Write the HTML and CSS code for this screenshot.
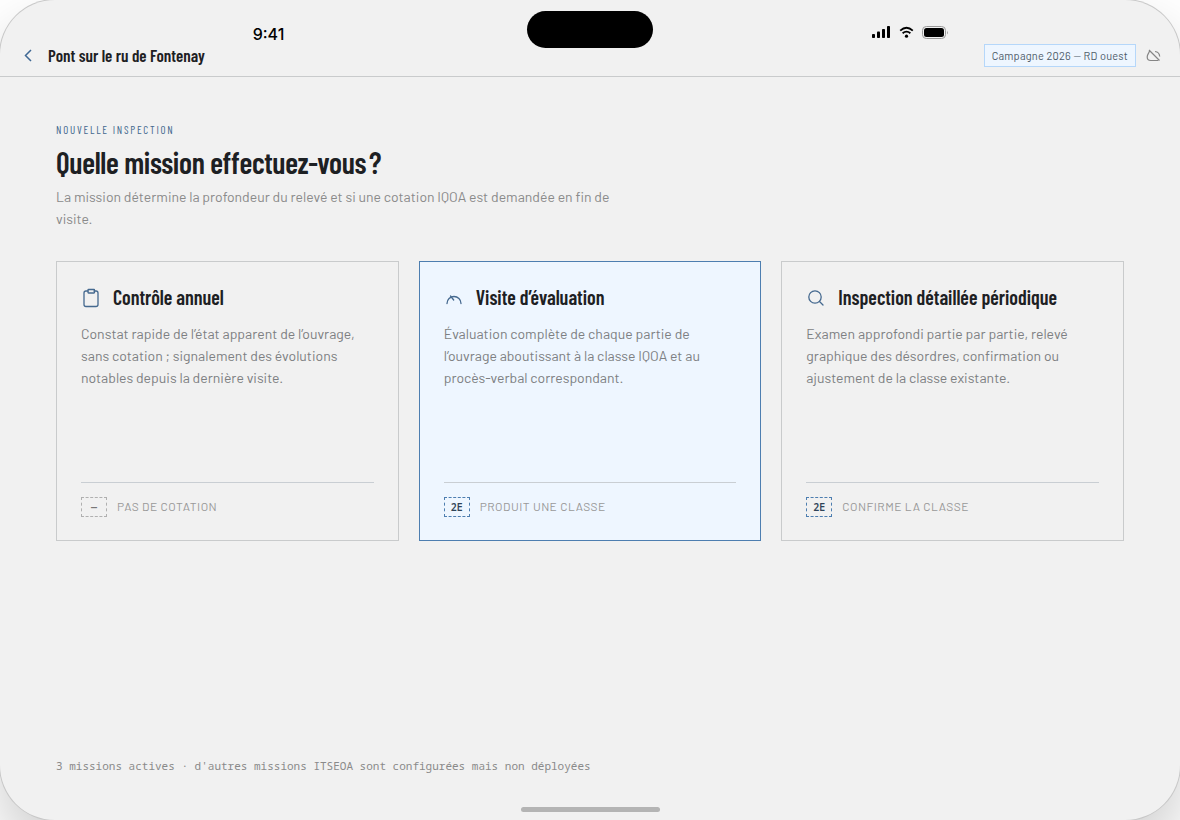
FILE: index.html
```html
<!DOCTYPE html>
<html lang="fr">

<head>
    <meta charset="utf-8">
    <meta name="viewport" content="width=device-width, initial-scale=1">
    <title>Nouvelle inspection</title>
    <link rel="stylesheet" href="styles.css">
</head>

<body>
    <div class="screen">
        <!-- barre d'état -->
        <div class="status">
            <span class="time">9:41</span>
            <div class="island"></div>
            <div class="status-icons">
                <svg width="19" height="12" viewBox="0 0 19 12">
                    <rect x="0" y="8" width="3" height="4" rx="0.8" />
                    <rect x="5" y="5.5" width="3" height="6.5" rx="0.8" />
                    <rect x="10" y="3" width="3" height="9" rx="0.8" />
                    <rect x="15" y="0" width="3" height="12" rx="0.8" />
                </svg>
                <svg width="15" height="12" viewBox="0 0 15 12">
                    <path d="M1.2 4.6Q7.5-1 13.8 4.6M3.6 7.3Q7.5 3.9 11.4 7.3" fill="none" stroke="#000" stroke-width="1.8" />
                    <circle cx="7.5" cy="10.2" r="1.6" />
                </svg>
                <svg width="27" height="13" viewBox="0 0 27 13">
                    <rect x="0.5" y="0.5" width="23" height="12" rx="3.8" fill="none" stroke="#999" />
                    <rect x="2" y="2" width="20" height="9" rx="2.5" />
                    <path d="M25 4.5q1.6 2 0 4z" fill="#999" />
                </svg>
            </div>
        </div>

        <header class="topbar">
            <button class="back" aria-label="Retour">
                <svg width="16" height="16" viewBox="0 0 16 16"><path d="M11 2L5.5 7.5 11 13" /></svg>
            </button>
            <span class="site">Pont sur le ru de Fontenay</span>
            <span class="campaign">Campagne 2026 — RD ouest</span>
            <svg class="offline" width="16" height="16" viewBox="0 0 16 16">
                <path d="M3 2L13.5 12.5M3.5 2.5C3.5 5 1.2 6 1.2 9c0 2 1.5 3.5 3.5 3.500h7.500M9 3.500c2.700.3 4.500 2.200 4.700 5" />
            </svg>
        </header>

        <main>
            <p class="eyebrow">Nouvelle inspection</p>
            <h1>Quelle mission effectuez-vous&#8239;?</h1>
            <p class="lead">La mission détermine la profondeur du relevé et si une cotation IQOA est demandée en fin de visite.</p>

            <div class="missions">
                <button class="card">
                    <span class="card-title">
                        <svg width="20" height="20" viewBox="0 0 20 20">
                            <path d="M7 3H5a2 2 0 0 0-2 2v11.5a2 2 0 0 0 2 2h10a2 2 0 0 0 2-2V5a2 2 0 0 0-2-2h-2" />
                            <rect x="7" y="1.5" width="6.5" height="3.5" rx="0.5" />
                        </svg>
                        Contrôle annuel
                    </span>
                    <span class="card-text">Constat rapide de l’état apparent de l’ouvrage, sans cotation ; signalement des évolutions notables depuis la dernière visite.</span>
                    <span class="card-foot"><span class="badge none">—</span>Pas de cotation</span>
                </button>
                <button class="card selected" aria-pressed="true">
                    <span class="card-title">
                        <svg width="20" height="20" viewBox="0 0 20 20">
                            <path d="M3 15.5a7 7 0 0 1 14 0M6.5 8l3.2 4" />
                        </svg>
                        Visite d’évaluation
                    </span>
                    <span class="card-text">Évaluation complète de chaque partie de l’ouvrage aboutissant à la classe IQOA et au procès-verbal correspondant.</span>
                    <span class="card-foot"><span class="badge">2E</span>Produit une classe</span>
                </button>
                <button class="card">
                    <span class="card-title">
                        <svg width="20" height="20" viewBox="0 0 20 20">
                            <circle cx="9" cy="9" r="6.2" />
                            <path d="M13.5 13.5l3.5 3.5" />
                        </svg>
                        Inspection détaillée périodique
                    </span>
                    <span class="card-text">Examen approfondi partie par partie, relevé graphique des désordres, confirmation ou ajustement de la classe existante.</span>
                    <span class="card-foot"><span class="badge">2E</span>Confirme la classe</span>
                </button>
            </div>

            <p class="note">3 missions actives · d'autres missions ITSEOA sont configurées mais non déployées</p>
        </main>
        <div class="home"></div>
    </div>
</body>

</html>
```
FILE: styles.css
```css
* {
    box-sizing: border-box;
}

body {
    margin: 0;
    background: #fff;
    color: #1d2023;
    font-family: Barlow, Roboto, sans-serif;
    overflow: hidden;
}

h1,
p {
    margin: 0;
}

button {
    border: 0;
    padding: 0;
    background: none;
    color: inherit;
    font-family: inherit;
    text-align: left;
    cursor: pointer;
}

.screen {
    position: relative;
    display: flex;
    flex-direction: column;
    min-height: 100vh;
    border-radius: 55px;
    background: #f1f1f1;
    box-shadow: 0 0 0 1px #c8c8c8, 0 30px 60px rgba(0, 0, 0, 0.2);
}

/* STATUS BAR */
.status {
    position: absolute;
    top: 11px;
    left: 0;
    right: 0;
    display: grid;
    grid-template-columns: 1fr 126px 1fr;
    justify-items: center;
}

.time {
    padding-top: 13px;
    padding-left: 10px;
    color: #000;
    font: 500 16px/20px Inter, sans-serif;
}

.island {
    width: 126px;
    height: 37px;
    border-radius: 19px;
    background: #000;
}

.status-icons {
    display: flex;
    align-items: flex-start;
    gap: 8px;
    padding-top: 15px;
    padding-right: 12px;
}

/* HEADER */
.topbar {
    display: flex;
    align-items: center;
    height: 77px;
    padding: 35px 18px 0 20px;
    border-bottom: 1px solid #c9cbcc;
}

.topbar svg {
    display: block;
    fill: none;
    stroke: #858585;
    stroke-width: 1.2;
}

.topbar .back svg {
    stroke: #3f6894;
    stroke-width: 1.5;
}

.site {
    margin-left: 12px;
    padding-bottom: 2px;
    font: 600 17px/22px "Barlow Condensed", "Roboto Condensed", Roboto, sans-serif;
}

.campaign {
    margin-left: auto;
    margin-right: 10px;
    padding: 0 7px;
    border: 1px solid #b5d7fa;
    background: #eef6ff;
    color: #4d5b69;
    font-size: 11px;
    line-height: 21px;
    letter-spacing: 0.02em;
}

/* CONTENT */
main {
    flex: 1;
    display: flex;
    flex-direction: column;
    padding: 44px 56px 44px;
}

.eyebrow {
    color: #45698f;
    font: 11px/18px "Barlow Condensed", "Roboto Condensed", Roboto, sans-serif;
    letter-spacing: 0.16em;
    text-transform: uppercase;
}

h1 {
    margin-top: 5px;
    font: 600 30px/36px "Barlow Condensed", "Roboto Condensed", Roboto, sans-serif;
    letter-spacing: -0.01em;
}

.lead {
    max-width: 560px;
    margin-top: 6px;
    color: #8a8a8a;
    font-size: 14px;
    line-height: 22px;
}

.missions {
    display: grid;
    grid-template-columns: repeat(3, 1fr);
    gap: 20px;
    margin-top: 31px;
}

.card {
    display: flex;
    flex-direction: column;
    min-height: 280px;
    padding: 24px 24px 23px;
    border: 1px solid #c9cbcc;
}

.card.selected {
    border-color: #4d7eb0;
    background: #eef6ff;
}

.card-title {
    display: flex;
    align-items: flex-end;
    gap: 12px;
    font: 600 20px/22px "Barlow Condensed", "Roboto Condensed", Roboto, sans-serif;
}

.card-title svg {
    flex: none;
    fill: none;
    stroke: #45698f;
    stroke-width: 1.3;
    stroke-linecap: round;
}

.card-text {
    margin-top: 15px;
    color: #7d7f82;
    font-size: 14px;
    line-height: 22px;
}

.card-foot {
    display: flex;
    align-self: stretch;
    gap: 10px;
    margin-top: auto;
    padding-top: 14px;
    border-top: 1px solid #c9ced3;
    color: #999;
    font-size: 12px;
    line-height: 18px;
    letter-spacing: 0.04em;
    text-transform: uppercase;
}

.badge {
    width: 26px;
    border: 1px dashed #4d7eb0;
    color: #2f4357;
    font: 600 10px/18px "Noto Sans Mono", "JetBrains Mono", "Liberation Mono", monospace;
    letter-spacing: 0;
    text-align: center;
}

.badge.none {
    border-color: #b0b0b0;
    color: #777;
}

.note {
    margin-top: auto;
    color: #8a8a8a;
    font: 11px/20px "Noto Sans Mono", "JetBrains Mono", "Liberation Mono", monospace;
}

.home {
    position: absolute;
    bottom: 8px;
    left: 50%;
    width: 139px;
    height: 5px;
    margin-left: -69px;
    border-radius: 3px;
    background: #b4b4b4;
}
```
